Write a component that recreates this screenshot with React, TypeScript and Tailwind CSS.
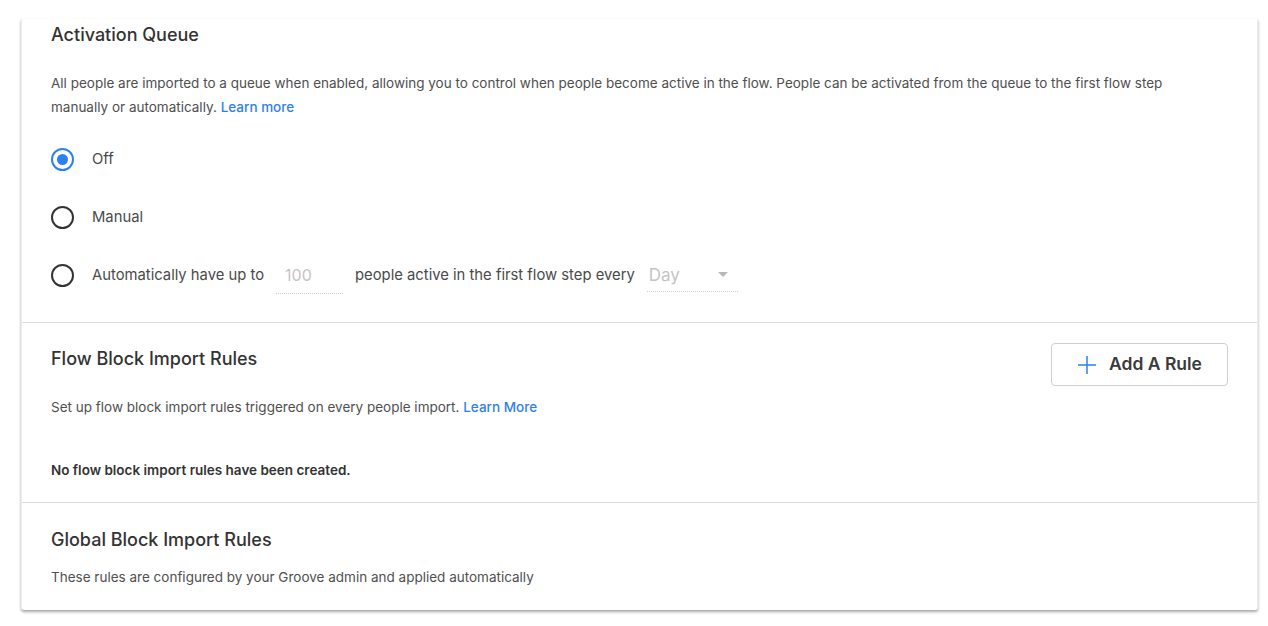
import { useState } from "react";

const Radio = ({ checked }: { checked: boolean }) => (
  <span
    className={
      "flex h-[23px] w-[23px] shrink-0 items-center justify-center rounded-full border-2 " +
      (checked ? "border-[#2f80ed]" : "border-[#333333]")
    }
  >
    {checked && <span className="h-[11px] w-[11px] rounded-full bg-[#2f80ed]" />}
  </span>
);

const App = () => {
  const [mode, setMode] = useState("off");

  return (
    <div className="min-h-screen bg-white pt-[19px] font-['Inter',sans-serif] text-[#4a4a4a]">
      <div className="ml-[21px] mr-[10px] rounded-b-[3px] border-x border-[#ececec] bg-white shadow-[0_2px_3px_rgba(0,0,0,0.35)]">

        {/* Activation Queue */}

        <div className="border-b border-[#dcdcdc] px-[29px] pt-[4px] pb-[32px]">
          <h2 className="text-[18px] font-medium leading-6 text-[#333333]">
            Activation Queue
          </h2>

          <p className="mt-6 max-w-[1125px] text-[13.5px] leading-6 text-[#4f4f4f]">
            All people are imported to a queue when enabled, allowing you to control when people become active in the flow. People can be activated from the queue to the first flow step manually or automatically.{" "}
            <a className="font-medium text-[#2f80ed]">Learn more</a>
          </p>

          <div className="mt-[25px] flex flex-col gap-[28px] text-[14.8px] text-[#4a4a4a]">
            <label className="flex h-[30px] items-center gap-[18px]" onClick={() => setMode("off")}>
              <Radio checked={mode === "off"} />
              <span>Off</span>
            </label>

            <label className="flex h-[30px] items-center gap-[18px]" onClick={() => setMode("manual")}>
              <Radio checked={mode === "manual"} />
              <span>Manual</span>
            </label>

            <label className="flex h-[30px] items-center gap-[18px]" onClick={() => setMode("auto")}>
              <Radio checked={mode === "auto"} />
              <span className="flex items-center gap-[12px]">
                <span>Automatically have up to</span>
                <span className="mt-[6px] w-[67px] border-b border-dotted border-[#cfcfcf] pb-[6px] pl-[9px] text-[16px] text-[#c4c4c4]">
                  100
                </span>
                <span>people active in the first flow step every</span>
                <span className="mt-[6px] flex w-[91px] items-center justify-between border-b border-dotted border-[#cfcfcf] pb-[6px] pl-[2px] pr-[10px] text-[#c4c4c4]">
                  <span className="text-[17px] leading-5">Day</span>
                  <span className="h-0 w-0 border-x-[5px] border-t-[5px] border-x-transparent border-t-[#b8b8b8]" />
                </span>
              </span>
            </label>
          </div>
        </div>

        {/* Flow Block Import Rules */}

        <div className="border-b border-[#dcdcdc] px-[29px] pt-[20px] pb-[20px]">
          <div className="flex items-start justify-between">
            <div>
              <h2 className="mt-[4px] text-[18px] font-medium leading-6 text-[#333333]">
                Flow Block Import Rules
              </h2>
              <p className="mt-6 text-[13.5px] leading-6 text-[#4f4f4f]">
                Set up flow block import rules triggered on every people import.{" "}
                <a className="font-medium text-[#2f80ed]">Learn More</a>
              </p>
            </div>

            <button className="flex h-[43px] w-[177px] items-center justify-center gap-[12px] rounded-[4px] border border-[#cfcfcf] bg-white text-[17.5px] font-semibold text-[#3a3a3a]">
              <svg width="20" height="20" viewBox="0 0 20 20" fill="none" stroke="#2f80ed" strokeWidth="1.5">
                <path d="M10 1v18M1 10h18" />
              </svg>
              Add A Rule
            </button>
          </div>

          <p className="mt-[39px] text-[13.5px] font-semibold leading-6 text-[#333333]">
            No flow block import rules have been created.
          </p>
        </div>

        {/* Global Block Import Rules */}

        <div className="px-[29px] pt-[25px] pb-[21px]">
          <h2 className="text-[18px] font-medium leading-6 text-[#333333]">
            Global Block Import Rules
          </h2>
          <p className="mt-[13px] text-[13.5px] leading-6 text-[#4f4f4f]">
            These rules are configured by your Groove admin and applied automatically
          </p>
        </div>

      </div>
    </div>
  );
};

export default App;
